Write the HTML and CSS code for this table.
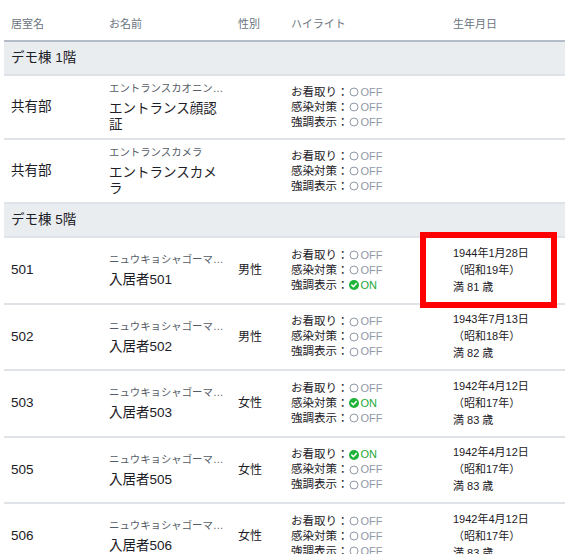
FILE: index.html
```html
<!DOCTYPE html>
<html lang="ja">
<head>
<meta charset="utf-8">
<title>居室一覧</title>
<link rel="stylesheet" href="styles.css">
</head>
<body>
<div class="table">
  <div class="row head">
    <div class="cell">居室名</div>
    <div class="cell">お名前</div>
    <div class="cell">性別</div>
    <div class="cell">ハイライト</div>
    <div class="cell">生年月日</div>
  </div>

  <div class="section">デモ棟 1階</div>

  <div class="row">
    <div class="cell room">共有部</div>
    <div class="cell name"><div class="kana">エントランスカオニンショウ</div><div class="full">エントランス顔認証</div></div>
    <div class="cell sex"></div>
    <div class="cell hl">
      <div class="hl-line">お看取り：<span class="st off"><svg class="ic" viewBox="0 0 10 10"><circle cx="5" cy="5" r="4" fill="none" stroke="#8f99a8" stroke-width="1"/></svg>OFF</span></div>
      <div class="hl-line">感染対策：<span class="st off"><svg class="ic" viewBox="0 0 10 10"><circle cx="5" cy="5" r="4" fill="none" stroke="#8f99a8" stroke-width="1"/></svg>OFF</span></div>
      <div class="hl-line">強調表示：<span class="st off"><svg class="ic" viewBox="0 0 10 10"><circle cx="5" cy="5" r="4" fill="none" stroke="#8f99a8" stroke-width="1"/></svg>OFF</span></div>
    </div>
    <div class="cell bday"></div>
  </div>

  <div class="row">
    <div class="cell room">共有部</div>
    <div class="cell name"><div class="kana">エントランスカメラ</div><div class="full">エントランスカメラ</div></div>
    <div class="cell sex"></div>
    <div class="cell hl">
      <div class="hl-line">お看取り：<span class="st off"><svg class="ic" viewBox="0 0 10 10"><circle cx="5" cy="5" r="4" fill="none" stroke="#8f99a8" stroke-width="1"/></svg>OFF</span></div>
      <div class="hl-line">感染対策：<span class="st off"><svg class="ic" viewBox="0 0 10 10"><circle cx="5" cy="5" r="4" fill="none" stroke="#8f99a8" stroke-width="1"/></svg>OFF</span></div>
      <div class="hl-line">強調表示：<span class="st off"><svg class="ic" viewBox="0 0 10 10"><circle cx="5" cy="5" r="4" fill="none" stroke="#8f99a8" stroke-width="1"/></svg>OFF</span></div>
    </div>
    <div class="cell bday"></div>
  </div>

  <div class="section">デモ棟 5階</div>

  <div class="row">
    <div class="cell room">501</div>
    <div class="cell name"><div class="kana">ニュウキョシャゴーマルイチ</div><div class="full">入居者501</div></div>
    <div class="cell sex">男性</div>
    <div class="cell hl">
      <div class="hl-line">お看取り：<span class="st off"><svg class="ic" viewBox="0 0 10 10"><circle cx="5" cy="5" r="4" fill="none" stroke="#8f99a8" stroke-width="1"/></svg>OFF</span></div>
      <div class="hl-line">感染対策：<span class="st off"><svg class="ic" viewBox="0 0 10 10"><circle cx="5" cy="5" r="4" fill="none" stroke="#8f99a8" stroke-width="1"/></svg>OFF</span></div>
      <div class="hl-line">強調表示：<span class="st on"><svg class="ic" viewBox="0 0 10 10"><circle cx="5" cy="5" r="5" fill="#1fb339"/><path d="M2.8 5.1 L4.4 6.7 L7.3 3.6" fill="none" stroke="#fff" stroke-width="1.5" stroke-linecap="round" stroke-linejoin="round"/></svg>ON</span></div>
    </div>
    <div class="cell bday"><div>1944年1月28日</div><div>（昭和19年）</div><div>満 81 歳</div></div>
  </div>

  <div class="row">
    <div class="cell room">502</div>
    <div class="cell name"><div class="kana">ニュウキョシャゴーマルニ</div><div class="full">入居者502</div></div>
    <div class="cell sex">男性</div>
    <div class="cell hl">
      <div class="hl-line">お看取り：<span class="st off"><svg class="ic" viewBox="0 0 10 10"><circle cx="5" cy="5" r="4" fill="none" stroke="#8f99a8" stroke-width="1"/></svg>OFF</span></div>
      <div class="hl-line">感染対策：<span class="st off"><svg class="ic" viewBox="0 0 10 10"><circle cx="5" cy="5" r="4" fill="none" stroke="#8f99a8" stroke-width="1"/></svg>OFF</span></div>
      <div class="hl-line">強調表示：<span class="st off"><svg class="ic" viewBox="0 0 10 10"><circle cx="5" cy="5" r="4" fill="none" stroke="#8f99a8" stroke-width="1"/></svg>OFF</span></div>
    </div>
    <div class="cell bday"><div>1943年7月13日</div><div>（昭和18年）</div><div>満 82 歳</div></div>
  </div>

  <div class="row">
    <div class="cell room">503</div>
    <div class="cell name"><div class="kana">ニュウキョシャゴーマルサン</div><div class="full">入居者503</div></div>
    <div class="cell sex">女性</div>
    <div class="cell hl">
      <div class="hl-line">お看取り：<span class="st off"><svg class="ic" viewBox="0 0 10 10"><circle cx="5" cy="5" r="4" fill="none" stroke="#8f99a8" stroke-width="1"/></svg>OFF</span></div>
      <div class="hl-line">感染対策：<span class="st on"><svg class="ic" viewBox="0 0 10 10"><circle cx="5" cy="5" r="5" fill="#1fb339"/><path d="M2.8 5.1 L4.4 6.7 L7.3 3.6" fill="none" stroke="#fff" stroke-width="1.5" stroke-linecap="round" stroke-linejoin="round"/></svg>ON</span></div>
      <div class="hl-line">強調表示：<span class="st off"><svg class="ic" viewBox="0 0 10 10"><circle cx="5" cy="5" r="4" fill="none" stroke="#8f99a8" stroke-width="1"/></svg>OFF</span></div>
    </div>
    <div class="cell bday"><div>1942年4月12日</div><div>（昭和17年）</div><div>満 83 歳</div></div>
  </div>

  <div class="row">
    <div class="cell room">505</div>
    <div class="cell name"><div class="kana">ニュウキョシャゴーマルゴ</div><div class="full">入居者505</div></div>
    <div class="cell sex">女性</div>
    <div class="cell hl">
      <div class="hl-line">お看取り：<span class="st on"><svg class="ic" viewBox="0 0 10 10"><circle cx="5" cy="5" r="5" fill="#1fb339"/><path d="M2.8 5.1 L4.4 6.7 L7.3 3.6" fill="none" stroke="#fff" stroke-width="1.5" stroke-linecap="round" stroke-linejoin="round"/></svg>ON</span></div>
      <div class="hl-line">感染対策：<span class="st off"><svg class="ic" viewBox="0 0 10 10"><circle cx="5" cy="5" r="4" fill="none" stroke="#8f99a8" stroke-width="1"/></svg>OFF</span></div>
      <div class="hl-line">強調表示：<span class="st off"><svg class="ic" viewBox="0 0 10 10"><circle cx="5" cy="5" r="4" fill="none" stroke="#8f99a8" stroke-width="1"/></svg>OFF</span></div>
    </div>
    <div class="cell bday"><div>1942年4月12日</div><div>（昭和17年）</div><div>満 83 歳</div></div>
  </div>

  <div class="row">
    <div class="cell room">506</div>
    <div class="cell name"><div class="kana">ニュウキョシャゴーマルロク</div><div class="full">入居者506</div></div>
    <div class="cell sex">女性</div>
    <div class="cell hl">
      <div class="hl-line">お看取り：<span class="st off"><svg class="ic" viewBox="0 0 10 10"><circle cx="5" cy="5" r="4" fill="none" stroke="#8f99a8" stroke-width="1"/></svg>OFF</span></div>
      <div class="hl-line">感染対策：<span class="st off"><svg class="ic" viewBox="0 0 10 10"><circle cx="5" cy="5" r="4" fill="none" stroke="#8f99a8" stroke-width="1"/></svg>OFF</span></div>
      <div class="hl-line">強調表示：<span class="st off"><svg class="ic" viewBox="0 0 10 10"><circle cx="5" cy="5" r="4" fill="none" stroke="#8f99a8" stroke-width="1"/></svg>OFF</span></div>
    </div>
    <div class="cell bday"><div>1942年4月12日</div><div>（昭和17年）</div><div>満 83 歳</div></div>
  </div>

  <div class="marker"></div>
</div>
</body>
</html>
```

FILE: styles.css
```css
html, body {
  margin: 0;
  padding: 0;
  overflow: hidden;
  background: #ffffff;
}

body {
  font-family: "Liberation Sans", "Noto Sans CJK JP", sans-serif;
  color: #1c2026;
}

.table {
  position: relative;
  margin-left: 4px;
}

.row {
  display: grid;
  grid-template-columns: 98px 129px 53px 162px 1fr;
  align-items: center;
  border-bottom: 2px solid #dfe3e8;
}

.cell {
  padding: 5px 7px;
  min-width: 0;
}

.head {
  border-bottom: 2px solid #b4bcc7;
}

.head .cell {
  padding: 17px 7px 9px;
  font-size: 11px;
  line-height: 14px;
  color: #6b7380;
}

.section {
  background: #eaedf0;
  border-bottom: 2px solid #dfe3e8;
  padding: 9px 7px;
  font-size: 13.5px;
  line-height: 14px;
  color: #1c2026;
}

.room {
  font-size: 13.5px;
  line-height: 16px;
}

.name {
  padding-right: 6px;
}

.kana {
  font-size: 10.4px;
  line-height: 16px;
  color: #565d67;
  white-space: nowrap;
  overflow: hidden;
  text-overflow: ellipsis;
  margin-bottom: 4px;
}

.full {
  font-size: 13.5px;
  line-height: 16px;
}

.sex {
  font-size: 12px;
  line-height: 16px;
}

.hl-line {
  font-size: 11.5px;
  line-height: 15px;
  white-space: nowrap;
  display: flex;
  align-items: center;
}

.st {
  display: inline-flex;
  align-items: center;
  font-size: 11px;
}

.st .ic {
  width: 10px;
  height: 10px;
  margin-right: 2px;
}

.off {
  color: #8f99a8;
}

.on {
  color: #1ba837;
}

.bday {
  position: relative;
  z-index: 2;
  font-size: 11px;
  line-height: 17px;
  padding-top: 6.5px;
  padding-bottom: 7px;
}

.marker {
  position: absolute;
  left: 416px;
  top: 232px;
  width: 137px;
  height: 76px;
  box-sizing: border-box;
  border: 6px solid #ff0000;
  background: #ffffff;
  z-index: 1;
}
```
